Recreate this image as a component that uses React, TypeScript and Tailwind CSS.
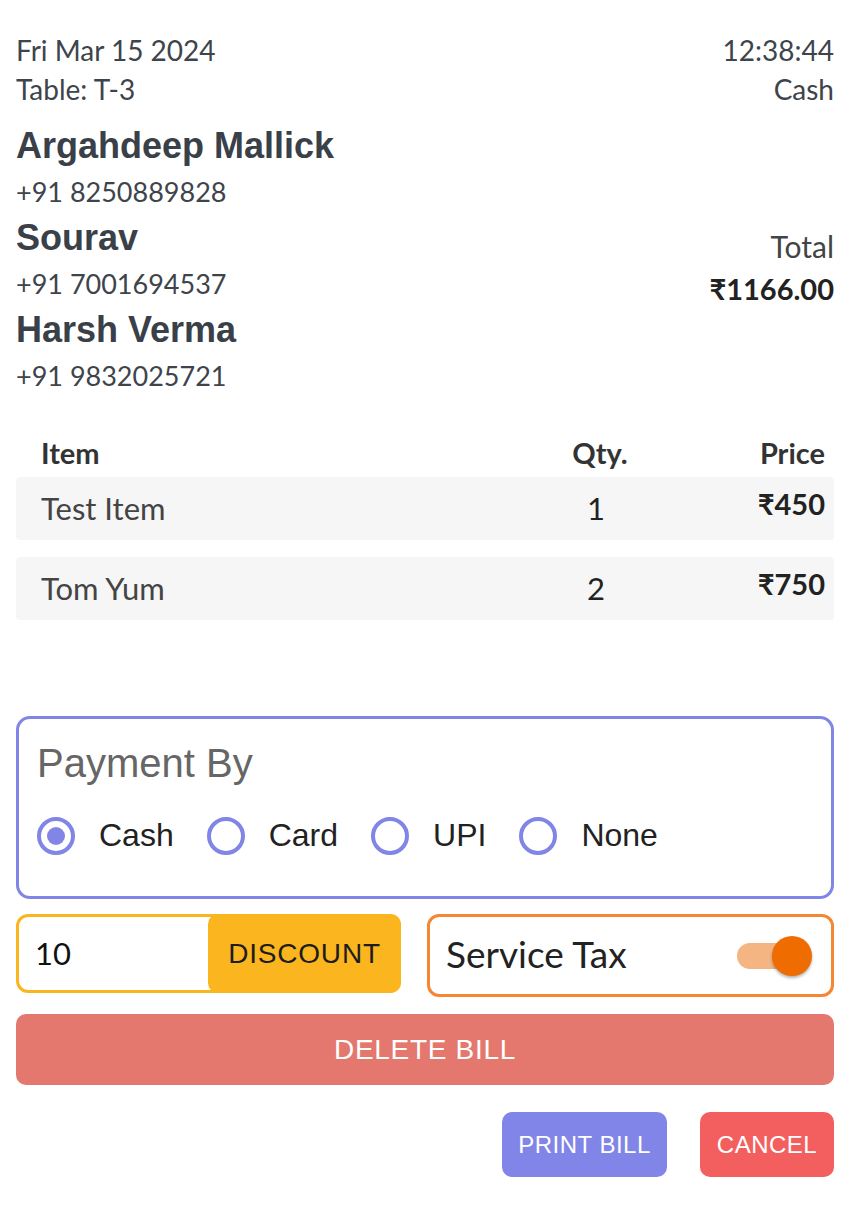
import { useState } from 'react'

type Customer = { name: string; phone: string }
type Item = { name: string; qty: number; price: number }

const customers: Customer[] = [
  { name: 'Argahdeep Mallick', phone: '+91 8250889828' },
  { name: 'Sourav', phone: '+91 7001694537' },
  { name: 'Harsh Verma', phone: '+91 9832025721' },
]

const items: Item[] = [
  { name: 'Test Item', qty: 1, price: 450 },
  { name: 'Tom Yum', qty: 2, price: 750 },
]

const methods = ['Cash', 'Card', 'UPI', 'None']

function Radio({ checked }: { checked: boolean }) {
  return (
    <span className="w-[38px] h-[38px] rounded-full border-[4px] border-[#8085e6] flex items-center justify-center shrink-0">
      {checked && <span className="w-[18px] h-[18px] rounded-full bg-[#8085e6]" />}
    </span>
  )
}

export default function App() {
  const [method, setMethod] = useState('Cash')
  const [serviceTax, setServiceTax] = useState(true)

  return (
    <div className="w-[850px] min-h-[1214px] bg-white px-4 pt-[31px] font-['Lato',sans-serif] text-[#3e444b]">
      <header className="flex justify-between text-[28px] leading-[39px]">
        <div>
          <p>Fri Mar 15 2024</p>
          <p>Table: T-3</p>
        </div>
        <div className="text-right">
          <p>12:38:44</p>
          <p>Cash</p>
        </div>
      </header>

      <section className="flex items-center justify-between mt-[14px]">
        <div>
          {customers.map((c) => (
            <div key={c.phone}>
              <h2 className="font-['Liberation_Sans',Arial,sans-serif] font-bold text-[36px] leading-[46px] text-[#3a4048]">{c.name}</h2>
              <p className="text-[27px] leading-[46px]">{c.phone}</p>
            </div>
          ))}
        </div>
        <div className="text-right mt-[16px]">
          <p className="text-[30px] leading-[40px] text-[#444]">Total</p>
          <p className="text-[29px] leading-[46px] font-bold text-[#222]">₹1166.00</p>
        </div>
      </section>

      <section className="mt-[38px]">
        <div className="grid grid-cols-[1fr_150px_150px] pl-[25px] pr-[9px] h-[40px] items-start leading-[32px] text-[29px] font-bold text-[#333]">
          <span>Item</span>
          <span className="text-center">Qty.</span>
          <span className="text-right">Price</span>
        </div>
        <div className="flex flex-col gap-[17px]">
          {items.map((it) => (
            <div key={it.name} className="grid grid-cols-[1fr_150px_150px] pl-[25px] pr-[9px] h-[63px] items-center bg-[#f6f6f6] rounded-[4px] text-[31px]">
              <span className="text-[#444]">{it.name}</span>
              <span className="text-center text-[#222] pr-[8px]">{it.qty}</span>
              <span className="text-right font-bold text-[#222] text-[29px] mb-[10px]">₹{it.price}</span>
            </div>
          ))}
        </div>
      </section>

      <div className="mt-[96px] border-[3px] border-[#8085e6] rounded-[14px] pl-[18px] pt-[22px] pb-[41px] font-['Liberation_Sans',Arial,sans-serif]">
        <p className="text-[40px] leading-[44px] text-[#666]">Payment By</p>
        <div className="flex items-center mt-[31px]">
          {methods.map((m) => (
            <label key={m} onClick={() => setMethod(m)} className="flex items-center gap-[24px] mr-[33px] cursor-pointer">
              <Radio checked={method === m} />
              <span className="text-[32px] leading-[39px] text-[#222]">{m}</span>
            </label>
          ))}
        </div>
      </div>

      <div className="flex gap-[26px] mt-[15px]">
        <div className="w-[385px] h-[79px] border-[3px] border-[#fbb51f] rounded-[12px] flex items-stretch">
          <input
            defaultValue="10"
            className="flex-1 min-w-0 pl-[16px] text-[31px] text-[#111] outline-none bg-transparent"
          />
          <button className="w-[193px] -my-[3px] -mr-[3px] rounded-[10px] bg-[#fbb51f] text-[#1d1d1d] font-['Liberation_Sans',Arial,sans-serif] text-[28px] tracking-[0.8px]">
            DISCOUNT
          </button>
        </div>
        <div className="flex-1 h-[83px] border-[3px] border-[#f58634] rounded-[12px] flex items-center justify-between pl-[16px] pr-[19px]">
          <span className="text-[37px] text-[#222] mb-[4px]">Service Tax</span>
          <button onClick={() => setServiceTax(!serviceTax)} className="relative w-[75px] h-[40px] flex items-center">
            <span className={`absolute left-0 right-[10px] h-[26px] rounded-full ${serviceTax ? 'bg-[#f4b582]' : 'bg-gray-300'}`} />
            <span className={`absolute ${serviceTax ? 'right-0' : 'left-0'} w-[40px] h-[40px] rounded-full shadow-[0_2px_3px_rgba(0,0,0,0.3)] ${serviceTax ? 'bg-[#ef6c00]' : 'bg-white'}`} />
          </button>
        </div>
      </div>

      <button className="mt-[17px] w-full h-[71px] rounded-[10px] bg-[#e4786e] text-white font-['Liberation_Sans',Arial,sans-serif] text-[28px] tracking-[0.7px]">
        DELETE BILL
      </button>

      <div className="flex justify-end gap-[33px] mt-[27px] pb-[37px] font-['Liberation_Sans',Arial,sans-serif]">
        <button className="w-[165px] h-[65px] rounded-[10px] bg-[#8285e8] text-white text-[24px] tracking-[0.5px]">PRINT BILL</button>
        <button className="w-[134px] h-[65px] rounded-[10px] bg-[#f35f5f] text-white text-[24px] tracking-[0.5px]">CANCEL</button>
      </div>
    </div>
  )
}
